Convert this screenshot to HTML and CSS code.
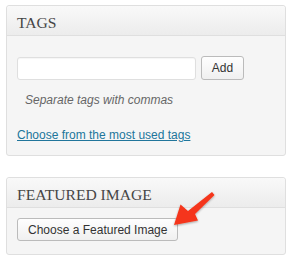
FILE: index.html
```html
<!DOCTYPE html>
<html lang="en">

<head>
    <meta charset="UTF-8">
    <meta name="viewport" content="width=device-width, initial-scale=1.0">
    <title>Tags and Featured Image</title>
    <link rel="stylesheet" href="styles.css">
</head>

<body>
    <div class="postbox">
        <h3 class="postbox-title">TAGS</h3>
        <div class="inside">
            <div class="tag-row">
                <input type="text" class="tag-input">
                <button class="button">Add</button>
            </div>
            <p class="howto">Separate tags with commas</p>
            <a href="#" class="tag-cloud-link">Choose from the most used tags</a>
        </div>
    </div>

    <div class="postbox featured">
        <h3 class="postbox-title">FEATURED IMAGE</h3>
        <div class="inside">
            <button class="button">Choose a Featured Image</button>
        </div>
        <svg class="callout" width="60" height="50" viewBox="0 0 60 50">
            <defs>
                <filter id="shade" x="-20%" y="-20%" width="140%" height="140%">
                    <feDropShadow dx="0" dy="1" stdDeviation="1" flood-color="#000" flood-opacity="0.35" />
                </filter>
            </defs>
            <path d="M46 8 L48.5 11 L29 30 L32 36.5 L8 41 L14.5 20.5 L22 27 Z" fill="#f5361a" filter="url(#shade)" />
        </svg>
    </div>
</body>

</html>
```

FILE: styles.css
```css
* {
    margin: 0;
    padding: 0;
    box-sizing: border-box;
}

body {
    font-family: "Liberation Sans", Arial, sans-serif;
    font-size: 12px;
    line-height: 15px;
    color: #333;
    background: #fff;
    padding: 5px 6px;
}

.postbox {
    position: relative;
    background: #f5f5f5;
    border: 1px solid #dfdfdf;
    border-radius: 3px;
    box-shadow: 0 1px 0 #fff inset;
}

.postbox-title {
    font-family: "Liberation Serif", Georgia, serif;
    font-weight: normal;
    font-size: 15.6px;
    line-height: 20px;
    color: #464646;
    height: 30px;
    padding: 7px 10px 0;
    background: linear-gradient(to bottom, #f9f9f9, #ececec);
    border-bottom: 1px solid #dfdfdf;
    border-radius: 3px 3px 0 0;
}

.inside {
    padding: 20px 10px 0;
    height: 119px;
}

.tag-row {
    display: flex;
    align-items: center;
    gap: 5px;
}

.tag-input {
    width: 179px;
    height: 23px;
    border: 1px solid #dfdfdf;
    border-radius: 3px;
    background: #fff;
    box-shadow: 0 1px 1px rgba(0, 0, 0, 0.04) inset;
}

.button {
    font-family: "Liberation Sans", Arial, sans-serif;
    font-size: 12px;
    color: #333;
    height: 24px;
    padding: 0 10px;
    white-space: nowrap;
    border: 1px solid #bbb;
    border-radius: 3px;
    background: linear-gradient(to bottom, #fefefe, #f0f0f0);
    cursor: pointer;
}

.tag-row .button {
    width: 43px;
    padding: 0;
}

.howto {
    font-style: italic;
    color: #666;
    margin: 13px 0 0 8px;
}

.tag-cloud-link {
    display: inline-block;
    margin-top: 20px;
    color: #21759b;
}

.featured {
    margin-top: 21px;
}

.featured .inside {
    height: 46px;
    padding-top: 10px;
}

.featured .button {
    width: 161px;
    height: 23px;
}

.callout {
    position: absolute;
    left: 159px;
    top: 6px;
}
```
